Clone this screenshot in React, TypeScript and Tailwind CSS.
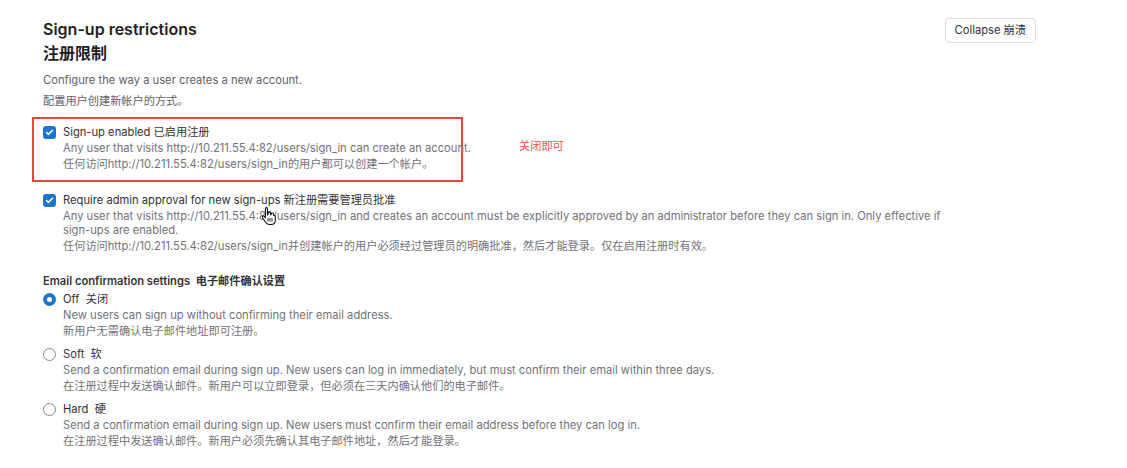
import { Check } from "lucide-react"

const font = { fontFamily: 'Inter, "Noto Sans CJK SC", sans-serif' }

function CheckBox() {
  return (
    <span className="flex h-[13px] w-[13px] shrink-0 items-center justify-center rounded-[3px] bg-[#1f75cb]">
      <Check className="h-[9px] w-[9px] text-white" strokeWidth={4} />
    </span>
  )
}

function Radio({ checked }: { checked?: boolean }) {
  return checked ? (
    <span className="flex h-[13px] w-[13px] shrink-0 items-center justify-center rounded-full bg-[#1f75cb]">
      <span className="h-[5px] w-[5px] rounded-full bg-white" />
    </span>
  ) : (
    <span className="h-[13px] w-[13px] shrink-0 rounded-full border border-[#89888d] bg-white" />
  )
}

const radios = [
  {
    label: "Off  关闭",
    checked: true,
    en: "New users can sign up without confirming their email address.",
    zh: "新用户无需确认电子邮件地址即可注册。",
  },
  {
    label: "Soft  软",
    en: "Send a confirmation email during sign up. New users can log in immediately, but must confirm their email within three days.",
    zh: "在注册过程中发送确认邮件。新用户可以立即登录，但必须在三天内确认他们的电子邮件。",
  },
  {
    label: "Hard  硬",
    en: "Send a confirmation email during sign up. New users must confirm their email address before they can log in.",
    zh: "在注册过程中发送确认邮件。新用户必须先确认其电子邮件地址，然后才能登录。",
  },
]

function Cursor() {
  return (
    <svg className="absolute left-[261px] top-[206px]" width="16" height="20" viewBox="0 0 16 20">
      <path
        d="M5 1.5c.8 0 1.4.6 1.4 1.4v6l.6-.1V7.4c0-.8.6-1.3 1.3-1.3s1.3.6 1.3 1.3v1.3l.5.1V8.2c0-.7.6-1.2 1.3-1.2s1.2.5 1.2 1.2v1.1l.4.1c.7 0 1.3.5 1.3 1.2v3.6c0 2.5-1.7 4.3-4.2 4.3H8.3c-1.5 0-2.5-.6-3.3-1.7L1.6 12c-.4-.6-.3-1.3.3-1.7.6-.4 1.3-.2 1.7.3l.8 1.2V2.9c0-.8.6-1.4 1.4-1.4z"
        fill="#fff"
        stroke="#111"
        strokeWidth="1.1"
        strokeLinejoin="round"
      />
      <path d="M7 12v3.5M9 12v3.5M11 12v3.5" stroke="#111" strokeWidth="0.9" />
    </svg>
  )
}

export default function App() {
  return (
    <div className="relative min-h-[468px] w-[1127px] bg-white" style={font}>
      <div className="flex justify-between pl-[43px] pr-[91px] pt-[18px]">
        <div>
          <h2 className="text-[16px] font-semibold leading-[22px] text-[#1f1e24]">Sign-up restrictions</h2>
          <h2 className="text-[16px] font-semibold leading-[27px] text-[#1f1e24]">注册限制</h2>
          <p className="mt-[5px] text-[11.2px] leading-[16px] text-[#626168]">Configure the way a user creates a new account.</p>
          <p className="mt-[5px] text-[11.2px] leading-[16px] text-[#626168]">配置用户创建新帐户的方式。</p>
        </div>
        <button className="h-[25px] self-start rounded-[4px] border border-[#dcdcde] bg-white px-[9px] text-[11.2px] text-[#333238]">
          Collapse 崩溃
        </button>
      </div>

      <div className="pl-[32px]">
        <div className="mt-[8px] flex items-start">
          <div className="w-[431px] border-2 border-[#e8453c] pb-[9px] pl-[9px] pt-[5px]">
            <div className="flex items-center gap-[7px] text-[11.2px] leading-[16px] text-[#333238]">
              <CheckBox />
              <span>Sign-up enabled 已启用注册</span>
            </div>
            <div className="pl-[20px] text-[11.2px] text-[#737278]">
              <p className="mt-[1px] whitespace-nowrap leading-[14px]">
                Any user that visits http://10.211.55.4:82/users/sign_in can create an account.
              </p>
              <p className="mt-[2px] whitespace-nowrap leading-[14px]">
                任何访问http://10.211.55.4:82/users/sign_in的用户都可以创建一个帐户。
              </p>
            </div>
          </div>
          <span className="ml-[56px] mt-[21px] text-[11.2px] leading-[16px] text-[#f0504a]">关闭即可</span>
        </div>
      </div>

      <div className="pl-[43px] pr-[180px]">
        <div className="mt-[10px] flex items-center gap-[7px] text-[11.2px] leading-[16px] text-[#333238]">
          <CheckBox />
          <span>Require admin approval for new sign-ups 新注册需要管理员批准</span>
        </div>
        <div className="pl-[20px] text-[11.2px] text-[#737278]">
          <p className="mt-[1px] leading-[14px]">
            Any user that visits http://10.211.55.4:82/users/sign_in and creates an account must be explicitly approved by an administrator before they can sign in. Only effective if sign-ups are enabled.
          </p>
          <p className="mt-[2px] leading-[14px]">
            任何访问http://10.211.55.4:82/users/sign_in并创建帐户的用户必须经过管理员的明确批准，然后才能登录。仅在启用注册时有效。
          </p>
        </div>

        <p className="mt-[20px] text-[11.2px] font-semibold leading-[16px] text-[#333238]">
          Email confirmation settings&nbsp; 电子邮件确认设置
        </p>
        {radios.map((r, i) => (
          <div key={r.label} className={i === 0 ? "mt-[2px]" : "mt-[7px]"}>
            <div className="flex items-center gap-[7px] text-[11.2px] leading-[16px] text-[#333238]">
              <Radio checked={r.checked} />
              <span className="whitespace-pre">{r.label}</span>
            </div>
            <div className="pl-[20px] text-[11.2px] leading-[16px] text-[#737278]">
              <p>{r.en}</p>
              <p>{r.zh}</p>
            </div>
          </div>
        ))}
      </div>

      <Cursor />
    </div>
  )
}
